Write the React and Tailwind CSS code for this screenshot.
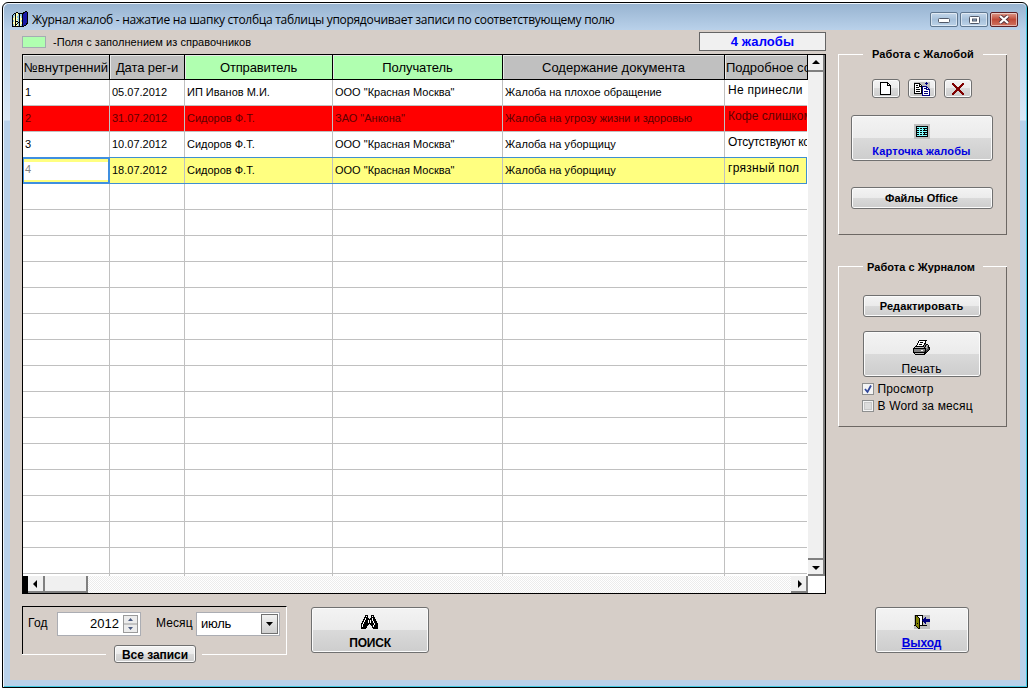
import React from 'react';

const PALETTE = { k: '#000', w: '#fff', g: '#808080', s: '#c0c0c0', n: '#00007f', c: '#7fffff', o: '#808000', r: '#7f0000', y: '#ffffb0', b: '#8fc8e8', m: '#1818a8', d: '#404040' };

function Pixels({ rows, className = '' }) {
  const w = rows[0].length;
  return (
    <svg width={w} height={rows.length} viewBox={`0 0 ${w} ${rows.length}`} shapeRendering="crispEdges" className={`shrink-0 ${className}`}>
      {rows.flatMap((row, y) =>
        [...row].map((ch, x) => (PALETTE[ch] ? <rect key={`${x}-${y}`} x={x} y={y} width="1" height="1" fill={PALETTE[ch]} /> : null))
      )}
    </svg>
  );
}

const BOOKS = [
  '.............kk.',
  '....kk.....kkmmk',
  '..kkyykkkkkkmmmk',
  '.kbkyybkbbkmmmmk',
  'kbbkyybkbbkmmmmk',
  'kbykybbkybkmmmmk',
  'kbykybbkybkmmmmk',
  'kyykyybkyykmmmmk',
  'kyykybbkyykmmmmk',
  'kbykyybkybkmmmmk',
  'kbykkkbkybkmmmmk',
  'kyykybkkyykmmmmk',
  'kyykykbkyykmmmkk',
  'kbykkybkybkmmmk.',
  'kbykyybkybkmkk..',
  'kkkkkkkkkkkk....',
];
const PAGE = [
  'kkkkkkkk...',
  'kwwwwwwkk..',
  'kwwwwwwkwk.',
  'kwwwwwwkkkk',
  'kwwwwwwwwwk',
  'kwwwwwwwwwk',
  'kwwwwwwwwwk',
  'kwwwwwwwwwk',
  'kwwwwwwwwwk',
  'kwwwwwwwwwk',
  'kwwwwwwwwwk',
  'kwwwwwwwwwk',
  'kkkkkkkkkkk',
];
const COPY = [
  'ssssssssssssnsss',
  'kkkkkksssssnnnss',
  'kwwwwkksssssnsss',
  'kwkkwkwkssssssss',
  'kwwwwkkknnnnnsss',
  'kwkkkwwknwwwnnss',
  'kwwwwwwknwnnnwns',
  'kwkkkkwknwwwnnnn',
  'kwwwwwwknwwwwwwn',
  'kwkkkkwknwnnnnwn',
  'kwwwwwwknwwwwwwn',
  'kkkkkkkknwnnnnwn',
  'ssssssssnwwwwwwn',
  'ssssssssnnnnnnnn',
];
const CROSS = [
  'rr........rr',
  'rrr......rrr',
  '.rrr....rrr.',
  '..rrr..rrr..',
  '...rrrrrr...',
  '....rrrr....',
  '....rrrr....',
  '...rrrrrr...',
  '..rrr..rrr..',
  '.rrr....rrr.',
  'rrr......rrr',
  'rr........rr',
];
const CARD = [
  'ssssssssssssssss',
  'ssssssssssssssss',
  'sskkkkkkkkkkkkss',
  'sskcccccccccckss',
  'sskkkckkckkkkkss',
  'sskccccccckcckss',
  'sskkkckkckkkkkss',
  'sskccccccccccкss'.replace('к', 'k'),
  'sskkkckkckkkkkss',
  'sskccccccckcckss',
  'sskkkckkckkkkkss',
  'sskccccccccccкss'.replace('к', 'k'),
  'sskkkkkkkkkkkkss',
  'ssssssssssssssss',
  'ssssssssssssssss',
];
const PRINTER = [
  '......kkkkkkkk...',
  '.....kwwwwwwk....',
  '.....kwkkkwwk....',
  '....kwwwwwwkk....',
  '....kwkkkwwkgkk..',
  '...kwwwwwwkgkgsk.',
  '..kkkkkkkkkgksgk.',
  '.kssssssssskgsgkk',
  'kkkkkkkkkkkkkggdk',
  'kgggggggggggkgddk',
  'kgggggggwwggkddk.',
  'kggggggggggdkdk..',
  'kkkkkkkkkkkkkk...',
  '.kssssssssskk....',
  '..kkkkkkkkkk.....',
];
const BINOCULARS = [
  '....kkk...kkk....',
  '....kwk...kwk....',
  '...kkkk...kkkk...',
  '...kwkkk.kkwkk...',
  '..kkwkkkkkkwkkk..',
  '..kwkkkwkwkwkkk..',
  '.kkwkkkwkwkkwkkk.',
  '.kwkkkkwkwkkwkkk.',
  'kkwkkkkkkkkkkwkkk',
  'kwkkkkkk.kkkkwkkk',
  'kwkkkkk...kkwkkkk',
  'kwkkkk.....kwkkkk',
  'kkkkkk.....kkkkkk',
  'kkkkk.......kkkkk',
];
const EXIT = [
  'skkkkkkkksssssss',
  'skokwwwwksssssss',
  'skookwwwkssnssss',
  'skoookwwksnnssss',
  'skoookwwknnnnnnn',
  'skoookwwnnnnnnnn',
  'skoookwwknnnnnnn',
  'skoookwwksnnssss',
  'skokokwwkssnssss',
  'skoookwwksssssss',
  'kkoookkkkkkkksss',
  'sskookssssssssss',
  'ssskokssssssssss',
  'sssskkssssssssss',
];

function Button({ children, className = '' }) {
  return (
    <button className={`flex shrink-0 flex-col items-center justify-center rounded-[3px] border border-[#707070] bg-[linear-gradient(to_bottom,#f3f3f3_0%,#ebebeb_49%,#dadada_50%,#cdcdcd_100%)] shadow-[inset_0_0_0_1px_#fbfbfb] ${className}`}>
      {children}
    </button>
  );
}

function Panel({ title, className = '', titleClass = '', children }) {
  return (
    <section className={`flex w-[169px] flex-col items-center border-b border-l border-b-[#6d6864] border-l-white ${className}`}>
      <header className="flex h-[1px] w-full items-center">
        <span className="h-px w-6 bg-white" />
        <span className={`flex-1 whitespace-nowrap text-center text-[11px] font-bold leading-3 ${titleClass}`}>{title}</span>
        <span className="h-px w-6 bg-white" />
      </header>
      <div className="flex w-full flex-1 flex-col items-center border-r border-[#6d6864] pr-[2px]">{children}</div>
    </section>
  );
}

const HEADERS = [
  ['№внутренний', 'w-[87px] bg-[#c0c0c0]', 'tracking-[0.05px]'],
  ['Дата рег-и', 'w-[75px] bg-[#c0c0c0]', 'tracking-[-0.1px]'],
  ['Отправитель', 'w-[148px] bg-[#b0ffb0]', 'tracking-[-0.15px]'],
  ['Получатель', 'w-[170px] bg-[#b0ffb0]', 'tracking-[-0.05px]'],
  ['Содержание документа', 'w-[222px] bg-[#c0c0c0]', 'tracking-[0px]'],
];

const ROWS = [
  ['1', '05.07.2012', 'ИП Иванов М.И.', 'ООО "Красная Москва"', 'Жалоба на плохое обращение', 'Не принесли'],
  ['2', '31.07.2012', 'Сидоров Ф.Т.', 'ЗАО "Анкона"', 'Жалоба на угрозу жизни и здоровью', 'Кофе слишком'],
  ['3', '10.07.2012', 'Сидоров Ф.Т.', 'ООО "Красная Москва"', 'Жалоба на уборщицу', 'Отсутствуют ко'],
  ['4', '18.07.2012', 'Сидоров Ф.Т.', 'ООО "Красная Москва"', 'Жалоба на уборщицу', 'грязный пол'],
  ...Array.from({ length: 15 }, () => ['', '', '', '', '', '']),
];
const WIDTHS = ['w-[87px]', 'w-[75px]', 'w-[148px]', 'w-[170px]', 'w-[222px]'];
const ROW_STYLE = {
  1: 'border-[#c0c0c0] bg-[#ff0000] text-[#600000]',
  2: 'border-[#3f8fd0]',
  3: 'border-[#3f8fd0] bg-[#ffff80]',
};
const DETAIL_TRACKING = { 1: 'tracking-[0.05px]', 2: 'tracking-[-0.25px]' };

function Row({ cells, index }) {
  const selected = index === 3;
  return (
    <div className={`flex h-[26px] w-[784px] shrink-0 border-b text-[11px] ${ROW_STYLE[index] || 'border-[#c0c0c0]'}`}>
      {WIDTHS.map((w, i) =>
        selected && i === 0 ? (
          <div key={i} className="-mt-px flex h-[27px] w-[87px] items-center border-2 border-l border-[#3f8fe0] bg-[#ffff80] pt-[3px] pb-[2px]">
            <span className="h-[18px] w-full bg-white pl-px leading-[14px] text-[#808080]">{cells[0]}</span>
          </div>
        ) : (
          <div key={i} className={`flex items-center whitespace-nowrap border-r border-[#c0c0c0] pl-[2px] ${w}`}>{cells[i]}</div>
        )
      )}
      <div className={`w-[82px] overflow-hidden whitespace-nowrap pl-[3px] text-[12px] leading-[21px] ${selected ? 'border-r border-[#3f8fd0]' : ''} ${DETAIL_TRACKING[index] || 'tracking-[0.3px]'}`}>{cells[5]}</div>
    </div>
  );
}

function ScrollButton({ className = '', points }) {
  return (
    <div className={`flex shrink-0 items-center justify-center border-b-2 border-r-2 border-[#808080] bg-[#f0f0f0] ${className}`}>
      {points && (
        <svg width="8" height="8" viewBox="0 0 8 8"><polygon points={points} fill="#000" /></svg>
      )}
    </div>
  );
}

const TRACK = 'bg-[repeating-conic-gradient(#ececec_0_25%,#fff_0_50%)] bg-[size:2px_2px]';

function Journal() {
  return (
    <div className="flex h-[540px] w-[804px] border border-black bg-white">
      <div className="flex w-[785px] flex-col">
        <div className="flex h-[25px] shrink-0 border-b border-black text-[13px]">
          {HEADERS.map(([label, cls, track]) => (
            <div key={label} className={`flex items-center justify-center whitespace-nowrap border-r border-black pt-[2px] shadow-[inset_1px_1px_0_#e8e8e8] ${cls} ${track}`}>{label}</div>
          ))}
          <div className="flex w-[83px] items-center overflow-hidden whitespace-nowrap border-r border-black bg-[#c0c0c0] pl-px pt-[2px] shadow-[inset_1px_1px_0_#e8e8e8]">Подробное содержание</div>
        </div>
        {ROWS.map((cells, i) => <Row key={i} cells={cells} index={i} />)}
        <div className="flex h-[2px]">
          {WIDTHS.map((w) => <div key={w} className={`border-r border-[#c0c0c0] ${w}`} />)}
        </div>
        <div className={`flex h-[17px] w-full shrink-0 ${TRACK}`}>
          <div className="w-[5px] bg-black" />
          <ScrollButton className="h-[17px] w-[17px] pt-px" points="5,0 5,8 1,4" />
          <ScrollButton className="h-[17px] w-[43px]" />
          <div className="flex-1" />
          <ScrollButton className="h-[17px] w-[17px] pt-px" points="3,0 3,8 7,4" />
        </div>
      </div>
      <div className="flex h-[521px] w-[17px] flex-col">
        <ScrollButton className="h-[17px] w-[17px]" points="0,5 8,5 4,1" />
        <div className="flex-1 border-b-2 border-r-2 border-[#808080] bg-[#f0f0f0]" />
        <ScrollButton className="h-[16px] w-[17px]" points="0,3 8,3 4,7" />
      </div>
    </div>
  );
}

function Filter() {
  return (
    <div className="flex h-[58px] w-[265px] flex-col">
      <div className="flex h-[48px] border-l border-r border-t border-l-black border-r-white border-t-black pl-[5px] pt-[5px] text-[12px]">
        <span className="w-[29px] pt-[3px] leading-4 tracking-[0.2px]">Год</span>
        <div className="flex h-[24px] w-[84px] items-center justify-end border border-[#abadb3] bg-white pr-[2px] text-[13px]">
          2012
          <span className="ml-[4px] flex h-[18px] w-[15px] flex-col border border-[#9a9a9a] bg-[#ececec]">
            <svg width="13" height="16" viewBox="0 0 13 16">
              <path d="M0 8h13" stroke="#9a9a9a" />
              <path d="M4 5h5L6.500 2zM4 11h5L6.500 14z" fill="#4a5a80" />
            </svg>
          </span>
        </div>
        <span className="ml-[15px] w-[40px] whitespace-nowrap pt-[3px] leading-4 tracking-[0.1px]">Месяц</span>
        <div className="flex h-[24px] w-[84px] items-center justify-between border border-[#abadb3] bg-white pl-[4px] pr-px text-[13px] tracking-[-0.25px]">
          июль
          <span className="flex h-[20px] w-[17px] items-center justify-center border border-[#707070] bg-linear-to-b from-[#f2f2f2] to-[#cfcfcf]">
            <svg width="7" height="4" viewBox="0 0 7 4"><path d="M0 0h7L3.500 4z" fill="#000" /></svg>
          </span>
        </div>
      </div>
      <div className="flex h-0 items-center">
        <span className="h-px w-[84px] bg-white" />
        <Button className="ml-[8px] h-[18px] w-[82px] pt-px text-[12px] font-bold tracking-[-0.05px]">Все записи</Button>
        <span className="ml-[6px] h-px flex-1 bg-white" />
      </div>
    </div>
  );
}

function CaptionButton({ close, children }) {
  return (
    <span className={`flex h-[15px] w-[28px] items-center justify-center rounded-[2px] border shadow-[inset_0_0_0_1px_rgba(255,255,255,0.5)] ${close ? 'border-[#5b1f24] bg-linear-to-b from-[#dc9a8c] via-[#c04a38] via-50% to-[#cf7260]' : 'border-[#5f7790] bg-linear-to-b from-[#c4d7ea] via-[#a6c0da] via-50% to-[#bdd3e9]'}`}>
      {children}
    </span>
  );
}

export default function App() {
  return (
    <div className="h-[688px] w-[1030px] overflow-hidden bg-white pl-[2px] pt-[2px] font-['Liberation_Sans',Arial,sans-serif] text-black">
      <div className="flex h-[686px] w-[1026px] flex-col rounded-t-[6px] border border-black bg-[linear-gradient(to_bottom,#b9d1ea_28px,#dbe9f7_117px,#b9d1ea_118px)] shadow-[inset_1px_1px_0_#eef5fc,inset_-1px_-1px_0_#45c8e0]">
        <div className="mx-px mt-px flex h-[26px] items-center rounded-t-[5px] bg-linear-to-b from-[#98b4d1] to-[#b9d1ea] pl-[8px] pr-[8px]">
          <Pixels rows={BOOKS} className="mt-[3px]" />
          <span className="ml-[4px] mt-[6px] whitespace-nowrap font-['Open_Sans','Noto_Sans',sans-serif] text-[12px] leading-4 tracking-[-0.29px]">Журнал жалоб - нажатие на шапку столбца таблицы упорядочивает записи по соответствующему полю</span>
          <div className="ml-auto mt-[5px] flex gap-[2px]">
            <CaptionButton>
              <svg width="12" height="6"><rect x=".5" y="1.500" width="11" height="4" rx="1" fill="#fff" stroke="#505868" /></svg>
            </CaptionButton>
            <CaptionButton>
              <svg width="11" height="8"><rect x=".5" y=".5" width="10" height="7" rx="1" fill="#fff" stroke="#505868" /><rect x="3.500" y="3" width="4" height="2" fill="#9ab5d0" stroke="#505868" /></svg>
            </CaptionButton>
            <CaptionButton close>
              <svg width="12" height="9" viewBox="0 0 12 9"><path d="M2 1l8 7M10 1L2 8" stroke="#50303a" strokeWidth="4" /><path d="M2 1l8 7M10 1L2 8" stroke="#fff" strokeWidth="2.300" /></svg>
            </CaptionButton>
          </div>
        </div>
        <div className="mx-[7px] flex h-[650px] w-[1010px] bg-[#d6cec8] pl-[12px]">
          <main className="flex w-[804px] flex-col">
            <div className="flex h-[24px] items-start pt-[2px]">
              <span className="mt-[4px] h-[12px] w-[24px] border border-[#a5acb2] bg-[#b0ffb0]" />
              <span className="ml-[7px] mt-[3px] text-[11px] leading-[14px] tracking-[0.05px]">-Поля с заполнением из справочников</span>
              <span className="ml-auto flex h-[19px] w-[127px] items-center justify-center border border-[#646464] bg-[#f0f0f0] text-[13px] font-bold tracking-[0.1px] text-[#0000ff]">4 жалобы</span>
            </div>
            <Journal />
            <div className="mt-[12px] flex">
              <Filter />
              <Button className="ml-[24px] mt-px h-[46px] w-[118px] pt-[4px] text-[12px] font-bold">
                <Pixels rows={BINOCULARS} className="mr-[2px]" />
                <span className="mt-[7px] leading-[14px] tracking-[-0.2px]">ПОИСК</span>
              </Button>
            </div>
          </main>
          <aside className="ml-[12px] flex w-[169px] flex-col items-center pt-[24px]">
            <Panel title="Работа с Жалобой" titleClass="-mt-px tracking-[0.1px]" className="h-[181px]">
              <div className="mt-[24px] flex gap-[8px]">
                <Button className="h-[19px] w-[28px]"><Pixels rows={PAGE} /></Button>
                <Button className="h-[19px] w-[28px]"><Pixels rows={COPY} /></Button>
                <Button className="h-[19px] w-[28px]"><Pixels rows={CROSS} /></Button>
              </div>
              <Button className="mt-[17px] h-[46px] w-[142px] text-[11px] font-bold tracking-[0.15px] text-[#0000e0]">
                <Pixels rows={CARD} className="mt-[6px]" />
                <span className="mt-[5px] leading-[14px]">Карточка жалобы</span>
              </Button>
              <Button className="mt-[26px] h-[22px] w-[142px] text-[11px] font-bold">Файлы Office</Button>
            </Panel>
            <Panel title="Работа с Журналом" titleClass="pr-[4px] tracking-[0.04px]" className="mt-[31px] h-[161px]">
              <div className="mt-[28px] flex w-[118px] flex-col">
                <Button className="h-[22px] w-[118px] text-[11px] font-bold tracking-[0.1px]">Редактировать</Button>
                <Button className="mt-[14px] h-[46px] w-[118px] text-[12px] tracking-[0.15px]">
                  <Pixels rows={PRINTER} className="mt-[7px]" />
                  <span className="mt-[7px] leading-[14px]">Печать</span>
                </Button>
                <label className="mt-[3px] flex h-[17px] items-center gap-[4px] whitespace-nowrap text-[12px] tracking-[0.15px]">
                  <svg width="12" height="12" className="-ml-px"><rect x=".5" y=".5" width="11" height="11" fill="#f4f4f4" stroke="#8e8f8f" /><path d="M3 6l2.500 3L9 2.500" fill="none" stroke="#31479b" strokeWidth="1.800" /></svg>
                  Просмотр
                </label>
                <label className="flex h-[17px] items-center gap-[4px] whitespace-nowrap text-[12px] tracking-[0.15px]">
                  <svg width="12" height="12" className="-ml-px"><rect x=".5" y=".5" width="11" height="11" fill="#f4f4f4" stroke="#8e8f8f" /><rect x="2.500" y="2.500" width="7" height="7" fill="#dcdcdc" stroke="#c8c8c8" /></svg>
                  В Word за месяц
                </label>
              </div>
            </Panel>
            <Button className="mr-[2px] mt-[180px] h-[46px] w-[94px] pt-[4px] text-[12px] font-bold text-[#0000e0]">
              <Pixels rows={EXIT} />
              <span className="mt-[7px] leading-[14px] tracking-[-0.1px] underline">Выход</span>
            </Button>
          </aside>
        </div>
      </div>
    </div>
  );
}
